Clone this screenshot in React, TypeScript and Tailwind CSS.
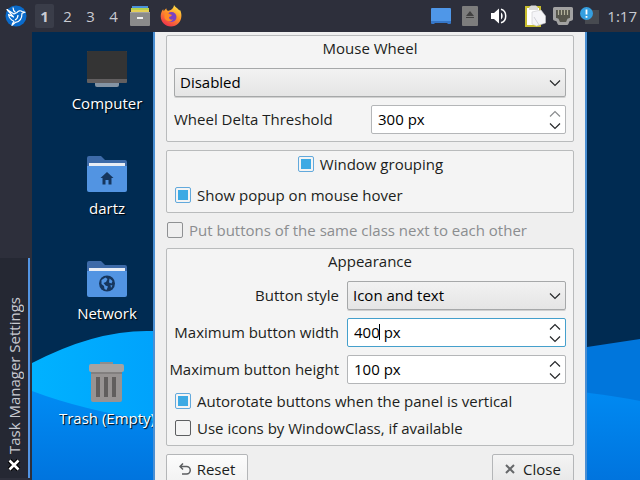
import { useState } from "react";
import type { ReactNode } from "react";

const inputBox = "h-[29px] w-full rounded-[2px] border bg-white pb-px pl-[6px] text-black outline-none";

function Chevron({ up = false, dim = false }: { up?: boolean; dim?: boolean }) {
  return (
    <svg viewBox="0 0 12 8" className={dim ? "h-2 w-3 text-[#8a8c8e]" : "h-2 w-3 text-[#26282a]"} fill="none" stroke="currentColor" strokeWidth="1.2">
      <path d={up ? "M1 6.5 6 1.5l5 5" : "M1 1.5l5 5 5-5"} />
    </svg>
  );
}

function FieldLabel({ htmlFor, children }: { htmlFor: string; children: ReactNode }) {
  return (
    <label htmlFor={htmlFor} className="justify-self-end whitespace-nowrap pb-[2px]">
      {children}
    </label>
  );
}

function Combo({ id, label, options }: { id: string; label: string; options: string[] }) {
  return (
    <div className="relative">
      <select
        id={id}
        aria-label={label}
        className="block h-[29px] w-full appearance-none rounded-[2px] border border-[#a6a8a9] bg-linear-to-b from-[#f2f2f2] to-[#e5e5e5] pb-px pl-[5px] text-black shadow-[0_1px_0_#d0d0d0] outline-none"
      >
        {options.map((o) => (
          <option key={o}>{o}</option>
        ))}
      </select>
      <span className="pointer-events-none absolute inset-y-0 right-[5px] flex items-center">
        <Chevron />
      </span>
    </div>
  );
}

interface SpinProps {
  id: string;
  initial: number;
  max?: number;
  active?: boolean;
}

function Spin({ id, initial, max = 1000, active = false }: SpinProps) {
  const [value, setValue] = useState(initial);
  const step = (by: number) => setValue((v) => Math.min(max, Math.max(0, v + by)));

  return (
    <div className="relative">
      <input
        id={id}
        type="text"
        value={`${value} px`}
        onChange={(e) => setValue(parseInt(e.target.value, 10) || 0)}
        className={active ? `${inputBox} block border-[#45a0cc]` : `${inputBox} block border-[#b4b6b8]`}
      />
      {active && <span className="absolute left-8 top-[6px] h-4 w-px bg-black" />}
      <div className="absolute inset-y-0 right-[5px] flex flex-col justify-center gap-1">
        <button type="button" aria-label="Increase" onClick={() => step(1)}>
          <Chevron up dim={value >= max} />
        </button>
        <button type="button" aria-label="Decrease" onClick={() => step(-1)}>
          <Chevron />
        </button>
      </div>
    </div>
  );
}

interface TickProps {
  label: string;
  checked?: boolean;
  disabled?: boolean;
}

function Tick({ label, checked = false, disabled = false }: TickProps) {
  return (
    <label className={disabled ? "flex h-[19px] items-center gap-[6px] whitespace-nowrap pb-px pl-px text-[#8b8d8f]" : "flex h-[19px] items-center gap-[6px] whitespace-nowrap pb-px pl-px"}>
      <input
        type="checkbox"
        defaultChecked={checked}
        disabled={disabled}
        className="size-4 shrink-0 appearance-none rounded-[2px] border border-[#5d5f61] bg-clip-content p-[2px] checked:border-[#62a9dc] checked:bg-[#3daae4] disabled:border-[#8f9193]"
      />
      {label}
    </label>
  );
}

function Group({ title, children }: { title: string; children: ReactNode }) {
  return (
    <section className="flex flex-col gap-2 rounded-[2px] border border-[#b9bbbc] bg-[#f4f4f4] px-[7px] pb-[7px]">
      <h2 className="h-6 text-center leading-6">{title}</h2>
      {children}
    </section>
  );
}

function Folder({ children }: { children: ReactNode }) {
  return (
    <svg viewBox="0 0 40 36" className="h-9 w-10">
      <path d="M0 2q0-2 2-2h12l4 4h20q2 0 2 2v8H0z" fill="#3d6aa8" />
      <path d="M2 7h36v6H2z" fill="#e8edf5" />
      <path d="M0 10h40v24q0 2-2 2H2q-2 0-2-2z" fill="#5294e2" />
      {children}
    </svg>
  );
}

function ComputerIcon() {
  return (
    <svg viewBox="0 0 40 36" className="h-9 w-10">
      <path d="M8 31h24v3q0 2-2 2H10q-2 0-2-2z" fill="#8494a4" />
      <rect width="40" height="32" rx="1" fill="#625f60" />
      <path d="M0 1q0-1 1-1h38q1 0 1 1v27H0z" fill="#343434" />
    </svg>
  );
}

function TrashIcon() {
  return (
    <svg viewBox="0 0 40 42" className="h-[42px] w-10">
      <path d="M13 2h13v4H13z" fill="#8d8d8d" />
      <path d="M4 8h31v32q0 2-2 2H6q-2 0-2-2z" fill="#979392" />
      <rect x="2" y="4" width="35" height="8" rx="2" fill="#a5a3a2" />
      <path d="M4 12h31v2H4z" fill="#827f7e" />
      <path d="M9 17h4v20H9zM17 17h4v20h-4zM25 17h4v20h-4z" fill="#615e5d" />
    </svg>
  );
}

function DesktopItem({ label, children }: { label: string; children: ReactNode }) {
  return (
    <a href="#" className="flex h-[105px] flex-col items-center">
      <span className="flex h-[42px] items-end">{children}</span>
      <span className="mt-[6px] whitespace-nowrap leading-5 text-white [text-shadow:1px_1px_1px_#000]">{label}</span>
    </a>
  );
}

function Wallpaper() {
  return (
    <svg viewBox="0 0 608 448" preserveAspectRatio="none" className="absolute inset-0 size-full">
      <defs>
        <linearGradient id="crest" x1="0" y1="0" x2="1" y2="0">
          <stop offset="0" stopColor="#00b2ff" />
          <stop offset="0.300" stopColor="#00a2fc" />
        </linearGradient>
        <linearGradient id="wave" x1="0" y1="0" x2="0" y2="1">
          <stop offset="0" stopColor="#008cf4" />
          <stop offset="1" stopColor="#0074de" />
        </linearGradient>
      </defs>
      <rect width="608" height="448" fill="#002b52" />
      <path d="M0 331Q65 297 121 299Q330 300 420 400V448H0z" fill="url(#crest)" />
      <path d="M400 340Q500 323 608 307V448H400z" fill="#0076dc" />
      <path d="M0 359Q50 378 121 389Q300 420 400 448H0z" fill="url(#wave)" />
      <path d="M400 350Q540 355 608 369V448H400z" fill="url(#wave)" />
    </svg>
  );
}

function LubuntuLogo() {
  return (
    <svg viewBox="0 0 22 22" className="size-[22px]">
      <circle cx="11" cy="11" r="10.5" fill="#0a6bcb" />
      <path d="M2 4.500l7 4.500 3-1.500c1-1.800 3.500-2.300 5-1l3 .8-3 1c0 5-2 8.500-6.500 9l-3.500 3c.3-2 1-3 2-4C6 15 4 12.500 3.500 9.500l5 2.500z" fill="none" stroke="#fff" strokeWidth="1.200" strokeLinejoin="round" />
      <path d="M8 2.500c0 2 .8 3.800 2.500 5M13 10c0 2-1 3.800-3 5" fill="none" stroke="#fff" strokeWidth="1.200" />
    </svg>
  );
}

function DrawerIcon() {
  return (
    <svg viewBox="0 0 20 20" className="size-5">
      <path d="M2 0h16v4H2z" fill="#4a93d8" />
      <path d="M1 2h18v4H1z" fill="#b7d24c" />
      <path d="M1 4h18v4H1z" fill="#e4cf55" />
      <rect y="6" width="20" height="14" rx="1" fill="#8b8b8b" />
      <path d="M0 6h20v1H0z" fill="#a4a4a4" />
      <path d="M7 11h6v2H7z" fill="#f2f2f2" />
    </svg>
  );
}

function FirefoxIcon() {
  return (
    <svg viewBox="0 0 22 22" className="size-[22px]">
      <defs>
        <linearGradient id="fox" x1="0.800" y1="0" x2="0.250" y2="1">
          <stop offset="0" stopColor="#ffe84a" />
          <stop offset="0.450" stopColor="#ff9428" />
          <stop offset="1" stopColor="#ee2c4e" />
        </linearGradient>
      </defs>
      <path d="M14 0c1 2 4 3.500 5.300 5.500.5-.3.600-.8.600-.8 1.200 2 1.600 4.300 1.500 6.300C21.200 17 16.800 21.500 11 21.500S.700 17 .700 11.300C.700 8.500 1.800 5.800 3.200 4.300l.5 2C4.700 5 5.500 4 6.300 3.200c0 1.200.7 2.300 1.700 2.600C10.500 5.500 13.500 4 14 0z" fill="url(#fox)" />
      <circle cx="11.500" cy="12" r="5" fill="#7a42c4" />
      <path d="M4.500 8.500c2-.9 4-.4 5.500.8l2 .6c-.5 1.500-2.600 1.300-3 2.600.2 2 2.200 2.600 4 1.800-1 2.700-6.500 3-8.500-1z" fill="#ff8a25" />
    </svg>
  );
}

function MonitorIcon() {
  return (
    <svg viewBox="0 0 20 17" className="h-[17px] w-5">
      <rect width="20" height="15" rx="1" fill="#4f97e8" />
      <path d="M0 13h20v2q0 1-1 1h-2l-1-1H4l-1 1H1q-1 0-1-1z" fill="#3677c8" />
    </svg>
  );
}

function EjectIcon() {
  return (
    <svg viewBox="0 0 16 20" className="h-5 w-4">
      <rect width="16" height="20" rx="1" fill="#7d7d7d" />
      <path d="M8 5l4 5H4zM4 11h8v1H4z" fill="#414141" />
    </svg>
  );
}

function VolumeIcon() {
  return (
    <svg viewBox="0 0 17 16" className="h-4 w-[17px]">
      <path d="M1 5h3l5-4.500v15L4 11H1z" fill="#fff" />
      <path d="M11 4.500c2.200 1.500 2.200 5.500 0 7z" fill="#fff" />
      <path d="M11 1.200c6.300 1.800 6.300 11.800 0 13.600" fill="none" stroke="#fff" strokeWidth="1.500" />
    </svg>
  );
}

function ClipboardIcon() {
  return (
    <svg viewBox="0 0 21 22" className="h-[22px] w-[21px]">
      <path d="M1 2h14v19H1z" fill="#fff" stroke="#c7bd2e" strokeWidth="2" />
      <path d="M4 2.500 6 .5h5l2 2V5H4z" fill="#d9d9d9" />
      <path d="M7 7l9-2 4.500 6v7l-9 3-4.500-2z" fill="#f5f5f8" stroke="#c9c9cd" strokeWidth="0.600" />
      <path d="M9 12l5 8" stroke="#d2d2d8" />
    </svg>
  );
}

function EthernetIcon() {
  return (
    <svg viewBox="0 0 20 18" className="h-[18px] w-5">
      <path d="M1.500 1.500h17V12l-3 1-1.500 3.500H6L4.500 13l-3-1z" fill="#55554c" stroke="#a2a2a2" strokeWidth="3" strokeLinejoin="round" />
      <path d="M5.500 3v5M8.500 3v5M11.500 3v5M14.500 3v5" stroke="#b3b29c" strokeWidth="1.200" />
    </svg>
  );
}

function UpdateIcon() {
  return (
    <svg viewBox="0 0 20 18" className="h-[18px] w-5">
      <path d="M5 3h14v14H5z" fill="#474a50" />
      <circle cx="6.500" cy="6.500" r="6.500" fill="#359fe0" />
      <path d="M5.600 2.500h1.800v5H5.600zM5.600 9h1.800v1.800H5.600z" fill="#fff" />
    </svg>
  );
}

function Panel() {
  return (
    <header className="flex h-8 shrink-0 items-center bg-[#2d2f3b] pl-[5px] pr-[3px] text-[#c9cbd2]">
      <button type="button" aria-label="Application menu"><LubuntuLogo /></button>
      <nav aria-label="Desktops" className="ml-2 flex gap-1">
        <button type="button" className="h-6 w-[19px] rounded-[2px] bg-[#3a3d49] font-bold">1</button>
        <button type="button" className="h-6 w-[19px]">2</button>
        <button type="button" className="h-6 w-[19px]">3</button>
        <button type="button" className="h-6 w-[19px]">4</button>
      </nav>
      <div className="ml-[7px] flex items-center gap-[10px]">
        <button type="button" aria-label="File manager"><DrawerIcon /></button>
        <button type="button" aria-label="Firefox"><FirefoxIcon /></button>
      </div>
      <div className="ml-auto flex items-center">
        <button type="button" aria-label="Show desktop"><MonitorIcon /></button>
        <button type="button" aria-label="Removable media" className="ml-[11px]"><EjectIcon /></button>
        <button type="button" aria-label="Volume" className="ml-3"><VolumeIcon /></button>
        <button type="button" aria-label="Clipboard" className="ml-[18px]"><ClipboardIcon /></button>
        <button type="button" aria-label="Network connection" className="ml-[7px]"><EthernetIcon /></button>
        <button type="button" aria-label="Updates" className="ml-[7px]"><UpdateIcon /></button>
        <time className="ml-[7px]">1:17</time>
      </div>
    </header>
  );
}

function TaskBar() {
  return (
    <aside className="flex w-8 shrink-0 flex-col justify-end bg-[#2d2f3b] pb-[2px]">
      <button
        type="button"
        className="mr-[2px] flex h-[220px] flex-col-reverse items-center gap-1 border-r-2 border-[#5294e2] bg-[#252833] pb-[6px] text-[#c9cbd2]"
      >
        <svg viewBox="0 0 14 14" className="size-[14px]" fill="none">
          <path d="M2.500 2.500l9 9M11.500 2.500l-9 9" stroke="#000" strokeWidth="5" />
          <path d="M2.500 2.500l9 9M11.500 2.500l-9 9" stroke="#fff" strokeWidth="2.500" />
        </svg>
        <span className="rotate-180 whitespace-nowrap leading-5 [writing-mode:vertical-rl]">Task Manager Settings</span>
      </button>
    </aside>
  );
}

function SettingsDialog() {
  return (
    <main className="absolute inset-y-0 left-[121px] right-[53px] flex flex-col gap-2 overflow-hidden border-x-2 border-[#4a8fd3] bg-[#efefef] px-[11px] pt-[3px] text-[#1c1e20]">
      <Group title="Mouse Wheel">
        <Combo id="wheel-action" label="Mouse wheel action" options={["Disabled", "Cycle windows"]} />
        <div className="grid grid-cols-[189px_1fr] items-center gap-2">
          <label htmlFor="wheel-delta" className="whitespace-nowrap pb-[2px]">Wheel Delta Threshold</label>
          <Spin id="wheel-delta" initial={300} max={300} />
        </div>
      </Group>

      <section className="flex flex-col gap-3 rounded-[2px] border border-[#b9bbbc] bg-[#f4f4f4] px-[7px] pb-[7px] pt-1">
        <div className="flex justify-center">
          <Tick label="Window grouping" checked />
        </div>
        <Tick label="Show popup on mouse hover" checked />
      </section>

      <Tick label="Put buttons of the same class next to each other" disabled />

      <Group title="Appearance">
        <div className="grid grid-cols-[165px_1fr] items-center gap-2">
          <FieldLabel htmlFor="button-style">Button style</FieldLabel>
          <Combo id="button-style" label="Button style" options={["Icon and text", "Only icon", "Only text"]} />
          <FieldLabel htmlFor="max-width">Maximum button width</FieldLabel>
          <Spin id="max-width" initial={400} active />
          <FieldLabel htmlFor="max-height">Maximum button height</FieldLabel>
          <Spin id="max-height" initial={100} />
        </div>
        <Tick label="Autorotate buttons when the panel is vertical" checked />
        <Tick label="Use icons by WindowClass, if available" />
      </Group>

      <div className="flex justify-between">
        <button type="button" className="flex h-[29px] w-[82px] items-center justify-center gap-[6px] rounded-[2px] border border-[#b4b6b8] bg-linear-to-b from-[#fcfcfc] to-[#f2f2f2]">
          <svg viewBox="0 0 12 12" className="size-3" fill="none" stroke="#5c5e60" strokeWidth="1.500">
            <path d="M4 .5 1 3.500l3 3M1 3.500h6.500a3.500 3.500 0 0 1 0 7.500H3" />
          </svg>
          Reset
        </button>
        <button type="button" className="flex h-[29px] w-[82px] items-center justify-center gap-2 rounded-[2px] border border-[#b4b6b8] bg-linear-to-b from-[#f4f4f4] to-[#e8e8e8]">
          <svg viewBox="0 0 10 10" className="size-[10px]" fill="none" stroke="#66686a" strokeWidth="2">
            <path d="M1 1l8 8M9 1L1 9" />
          </svg>
          Close
        </button>
      </div>
    </main>
  );
}

export default function App() {
  return (
    <div className="flex h-screen flex-col overflow-hidden font-['Open_Sans','Noto_Sans',sans-serif] text-[15px] leading-5">
      <Panel />
      <div className="flex min-h-0 flex-1">
        <TaskBar />
        <div className="relative flex-1 overflow-hidden">
          <Wallpaper />
          <div className="relative flex w-[150px] flex-col pt-[13px]">
            <DesktopItem label="Computer"><ComputerIcon /></DesktopItem>
            <DesktopItem label="dartz">
              <Folder>
                <path d="M20 16l-6.500 6h2v6.500h3V24h3v4.500h3V22h2z" fill="#16365e" />
              </Folder>
            </DesktopItem>
            <DesktopItem label="Network">
              <Folder>
                <circle cx="20" cy="22.500" r="8" fill="#16365e" />
                <path d="M14.500 19l4-2.500 2 1.500-1.500 3-2.500 1 2 2.500 2.500 1-1.500 3.500-2-1-.5-3-2.500-2zM22.500 17.500l3 2.500-1 2.500-2.500-1zM23.500 24l2 .5-1.500 2.500z" fill="#5294e2" />
              </Folder>
            </DesktopItem>
            <DesktopItem label="Trash (Empty)"><TrashIcon /></DesktopItem>
          </div>
          <SettingsDialog />
        </div>
      </div>
    </div>
  );
}
